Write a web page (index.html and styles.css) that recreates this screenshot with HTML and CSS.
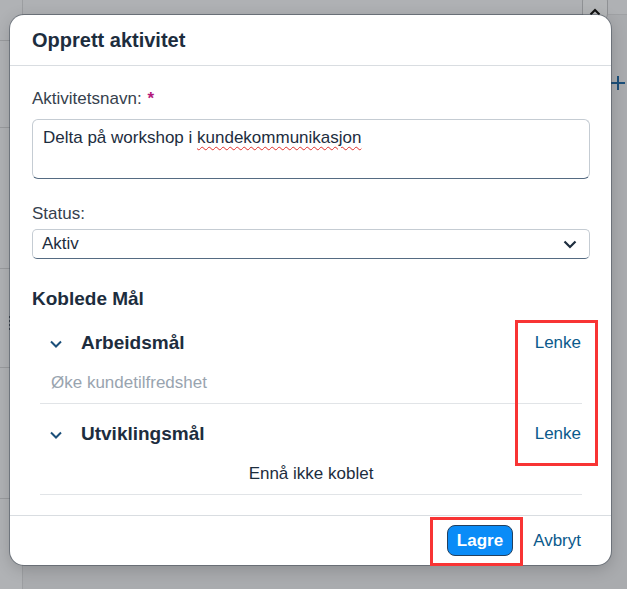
FILE: index.html
```html
<!DOCTYPE html>
<html lang="no">
<head>
    <meta charset="UTF-8">
    <title>Opprett aktivitet</title>
    <link rel="stylesheet" href="styles.css">
</head>
<body>

<!-- page behind the dialog (dimmed) -->
<div class="page">
    <div class="topbar"></div>
    <div class="sidebar">
        <div class="side-row r1"></div>
        <div class="side-row r2"></div>
        <div class="side-row r3"></div>
        <div class="side-row r4"></div>
        <div class="side-row r5"></div>
    </div>
    <div class="splitter"><span></span><span></span><span></span><span></span></div>
    <button class="collapse-btn">
        <svg width="12" height="8" viewBox="0 0 12 8"><path d="M1.5 6.5 L6 2 L10.5 6.5" fill="none" stroke="#111" stroke-width="2"/></svg>
    </button>
    <div class="add-icon">
        <svg width="16" height="16" viewBox="0 0 16 16"><path d="M8 1 V15 M1 8 H15" stroke="#1b4f7a" stroke-width="2"/></svg>
    </div>
</div>

<div class="dialog">
    <div class="dialog-header">
        <h1 class="dialog-title">Opprett aktivitet</h1>
    </div>

    <div class="dialog-body">
        <label class="label label-first">Aktivitetsnavn:<span class="required">*</span></label>
        <div class="textarea">Delta på workshop i <span class="misspelled">kundekommunikasjon</span></div>

        <label class="label label-status">Status:</label>
        <div class="select">
            <span>Aktiv</span>
            <svg width="14" height="9" viewBox="0 0 14 9"><path d="M1.5 1.5 L7 7 L12.5 1.5" fill="none" stroke="#1d2d3e" stroke-width="2.2"/></svg>
        </div>

        <h2 class="section-title">Koblede Mål</h2>

        <div class="goal goal-first">
            <div class="goal-head">
                <svg class="chevron" width="12" height="8" viewBox="0 0 12 8"><path d="M1 1.5 L6 6.5 L11 1.5" fill="none" stroke="#1b4f7a" stroke-width="2"/></svg>
                <span class="goal-title">Arbeidsmål</span>
                <a class="link goal-link">Lenke</a>
            </div>
            <div class="goal-item">Øke kundetilfredshet</div>
        </div>

        <div class="goal">
            <div class="goal-head">
                <svg class="chevron" width="12" height="8" viewBox="0 0 12 8"><path d="M1 1.5 L6 6.5 L11 1.5" fill="none" stroke="#1b4f7a" stroke-width="2"/></svg>
                <span class="goal-title">Utviklingsmål</span>
                <a class="link goal-link">Lenke</a>
            </div>
            <div class="goal-empty">Ennå ikke koblet</div>
        </div>
    </div>

    <div class="dialog-footer">
        <button class="btn-primary">Lagre</button>
        <a class="link">Avbryt</a>
    </div>
</div>

<!-- annotation boxes -->
<div class="mark mark-links"></div>
<div class="mark mark-save"></div>

</body>
</html>
```

FILE: styles.css
```css
body {
    margin: 0;
    width: 627px;
    height: 589px;
    overflow: hidden;
    position: relative;
    background-color: #a9abae;
    font-family: "Liberation Sans", Arial, sans-serif;
    color: #1d2d3e;
}

/* dimmed page */
.page {
    position: absolute;
    inset: 0;
}

.topbar {
    height: 14px;
    margin-left: 22px;
    border-bottom: 1px solid #9fa1a4;
    background-color: #afb1b4;
}

.sidebar {
    position: absolute;
    top: 0;
    left: 0;
    bottom: 0;
    width: 22px;
    border-right: 1px solid #9c9ea1;
    background-color: #b0b2b5;
}

.side-row {
    position: absolute;
    left: 0;
    right: 0;
    border-top: 1px solid #999b9e;
}
.r1 { top: 40px; }
.r2 { top: 127px; }
.r3 { top: 268px; }
.r4 { top: 367px; }
.r5 { top: 498px; }

.splitter {
    position: absolute;
    left: 9px;
    top: 316px;
    display: flex;
    flex-direction: column;
    gap: 2px;
}
.splitter span {
    width: 2px;
    height: 2px;
    background-color: #3a4148;
}

.collapse-btn {
    position: absolute;
    left: 582px;
    top: -6px;
    width: 26px;
    height: 27px;
    border: 1px solid #8f9194;
    border-radius: 7px;
    background-color: #b3b5b7;
    padding: 8px 0 0;
}

.add-icon {
    position: absolute;
    left: 610px;
    top: 75px;
}

/* dialog */
.dialog {
    position: absolute;
    left: 10px;
    top: 15px;
    width: 601px;
    height: 550px;
    background-color: #fff;
    border-radius: 14px;
    box-shadow: 0 0 0 1px rgba(50, 62, 75, .45), 0 4px 16px rgba(0, 0, 0, .18);
    display: flex;
    flex-direction: column;
    overflow: hidden;
}

.dialog-header {
    height: 49px;
    padding: 1px 22px 0;
    display: flex;
    align-items: center;
    border-bottom: 1px solid #d9dde1;
}

.dialog-title {
    margin: 0;
    font-size: 20px;
    font-weight: bold;
    color: #1d2d3e;
}

.dialog-body {
    flex: 1;
    padding: 23px 21px 0 22px;
}

.label {
    display: block;
    font-size: 17px;
    line-height: 20px;
    color: #36414d;
}

.label-first {
    margin-bottom: 10px;
}

.label-status {
    margin-top: 25px;
    margin-bottom: 5px;
}

.required {
    color: #b3197a;
    font-weight: bold;
    margin-left: 6px;
}

.textarea {
    height: 60px;
    box-sizing: border-box;
    padding: 6px 10px;
    border: 1px solid #c5ccd3;
    border-bottom-color: #556b82;
    border-radius: 6px;
    font-size: 17px;
    line-height: 24px;
}

.misspelled {
    text-decoration: underline wavy #e0312b;
    text-decoration-thickness: 1px;
    text-underline-offset: 3px;
}

.select {
    height: 30px;
    box-sizing: border-box;
    padding: 0 12px 0 9px;
    border: 1px solid #c5ccd3;
    border-bottom-color: #556b82;
    border-radius: 5px;
    display: flex;
    align-items: center;
    justify-content: space-between;
    font-size: 17px;
}

.section-title {
    margin: 28px 0 0;
    font-size: 19px;
    line-height: 24px;
    font-weight: bold;
}

.goal {
    margin: 0 8px;
    padding-bottom: 10px;
    border-bottom: 1px solid #e1e4e7;
}

.goal-first {
    margin-top: 12px;
}

.goal-head {
    height: 40px;
    margin-top: 10px;
    padding: 0 1px 0 10px;
    display: flex;
    align-items: center;
}
.goal-first .goal-head {
    margin-top: 0;
}

.chevron {
    margin-top: 1px;
}

.goal-title {
    flex: 1;
    margin-left: 19px;
    font-size: 19px;
    font-weight: bold;
}

.link {
    font-size: 17px;
    color: #0b5a8c;
    cursor: pointer;
}

.goal-item,
.goal-empty {
    margin-top: 10px;
    font-size: 17px;
    line-height: 20px;
}

.goal-item {
    padding-left: 11px;
    color: #99a4af;
}

.goal-empty {
    text-align: center;
}

.dialog-footer {
    height: 49px;
    border-top: 1px solid #d9dde1;
    padding-right: 30px;
    display: flex;
    align-items: center;
    justify-content: flex-end;
    gap: 20px;
}

.btn-primary {
    height: 31px;
    padding: 0 9px;
    border: 1px solid #24405e;
    border-radius: 8px;
    background-color: #0a8cf7;
    color: #fff;
    font-family: inherit;
    font-size: 17px;
    font-weight: bold;
    cursor: pointer;
}

/* red annotation frames */
.mark {
    position: absolute;
    border: 3px solid #f83434;
    box-sizing: border-box;
}

.mark-links {
    left: 515px;
    top: 320px;
    width: 83px;
    height: 146px;
}

.mark-save {
    left: 430px;
    top: 517px;
    width: 93px;
    height: 49px;
}
```
